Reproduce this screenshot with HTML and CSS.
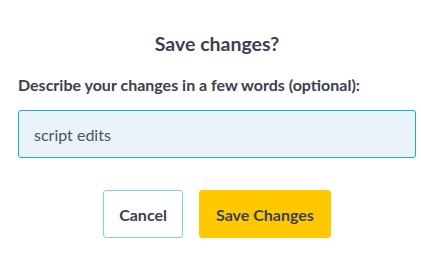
FILE: index.html
```html
<!DOCTYPE html>
<html>
<head>
<meta charset="utf-8">
<link rel="stylesheet" href="styles.css">
</head>
<body>
<div class="dialog">
  <h1 class="title">Save changes?</h1>
  <label class="label" for="desc">Describe your changes in a few words (optional):</label>
  <input id="desc" class="field" type="text" value="script edits">
  <div class="actions">
    <button class="btn btn-cancel">Cancel</button>
    <button class="btn btn-save">Save Changes</button>
  </div>
</div>
</body>
</html>
```
FILE: styles.css
```css
html, body {
  margin: 0;
  padding: 0;
  background: #ffffff;
}
body {
  font-family: Lato, "Open Sans", sans-serif;
  color: #3a4151;
}
.dialog {
  padding: 32px 5px 0 18px;
  display: flex;
  flex-direction: column;
}
.title {
  margin: 0;
  font-size: 19.5px;
  line-height: 23px;
  font-weight: 700;
  text-align: center;
}
.label {
  margin-top: 20px;
  font-size: 16px;
  line-height: 19px;
  font-weight: 700;
}
.field {
  margin: 16px 0 0 0;
  box-sizing: border-box;
  height: 48px;
  width: 398px;
  padding: 0 15px;
  border: 1px solid #12afd6;
  border-radius: 3px;
  background: #e9f3f9;
  font-family: Lato, sans-serif;
  font-size: 16px;
  color: #4d5260;
  outline: none;
}
.actions {
  margin-top: 32px;
  display: flex;
  justify-content: center;
  gap: 16px;
}
.btn {
  box-sizing: border-box;
  height: 48px;
  padding: 0 15px;
  border-radius: 3px;
  font-family: Lato, sans-serif;
  font-size: 16px;
  font-weight: 700;
  color: #3a4151;
  cursor: pointer;
}
.btn-cancel {
  background: #ffffff;
  border: 1px solid #7fd3e6;
}
.btn-save {
  background: #ffc800;
  border: 1px solid #ffc800;
  padding: 0 16px;
}
```
